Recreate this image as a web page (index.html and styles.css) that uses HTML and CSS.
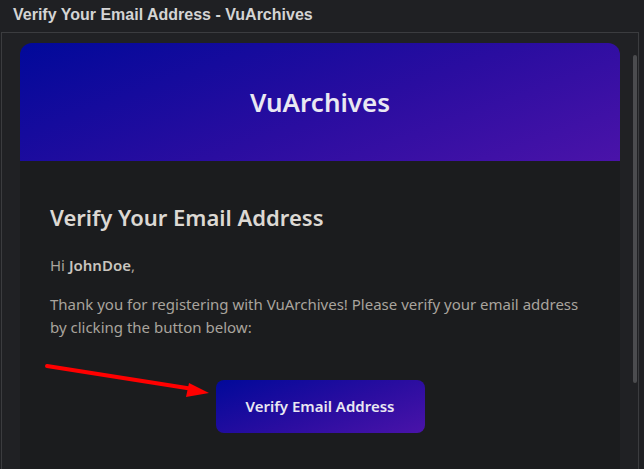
FILE: index.html
```html
<!DOCTYPE html>
<html lang="en">
<head>
<meta charset="utf-8">
<title>Verify Your Email Address - VuArchives</title>
<link rel="stylesheet" href="styles.css">
</head>
<body>
<div class="titlebar">Verify Your Email Address - VuArchives</div>
<div class="frame">
  <div class="email">
    <div class="email-header">VuArchives</div>
    <div class="email-body">
      <h2 class="heading">Verify Your Email Address</h2>
      <p class="text">Hi <strong class="name">JohnDoe</strong>,</p>
      <p class="text">Thank you for registering with VuArchives! Please verify your email address by clicking the button below:</p>
      <div class="actions"><a class="button" href="#">Verify Email Address</a></div>
    </div>
  </div>
  <div class="scrollbar"></div>
  <svg class="arrow" width="220" height="60" viewBox="0 0 220 60" xmlns="http://www.w3.org/2000/svg">
    <line x1="46" y1="26" x2="192" y2="49" stroke="#ff0000" stroke-width="4" stroke-linecap="round"/>
    <polygon points="188,43 208,53 185,57" fill="#ff0000"/>
  </svg>
</div>
</body>
</html>
```
FILE: styles.css
```css
html, body {
  margin: 0;
  padding: 0;
  background: #1f2023;
  height: 100%;
  overflow: hidden;
}
.titlebar {
  height: 32px;
  box-sizing: border-box;
  padding: 6px 0 0 13px;
  font-family: "Liberation Sans", Arial, sans-serif;
  font-weight: bold;
  font-size: 16px;
  color: #d4d4d4;
}
.frame {
  position: relative;
  margin-left: 1px;
  width: 638px;
  box-sizing: border-box;
  height: 437px;
  overflow: hidden;
  border: 1px solid #3b3c3f;
  border-bottom: none;
  background: #202124;
  padding: 10px 0 0 18px;
}
.email {
  width: 600px;
  font-family: "Noto Sans", "Open Sans", sans-serif;
}
.email-header {
  height: 118px;
  border-radius: 12px 12px 0 0;
  background: linear-gradient(160deg, #01099a 0%, #2a0da0 55%, #4a13a9 100%);
  color: #e9e8f2;
  font-size: 26px;
  font-weight: 600;
  display: flex;
  align-items: center;
  justify-content: center;
}
.email-body {
  background: #1b1c1e;
  padding: 42px 30px 40px;
  height: 400px;
}
.heading {
  margin: 0 0 22px;
  font-size: 22px;
  font-weight: 600;
  color: #dcd8d3;
  line-height: 1.3;
}
.text {
  margin: 0 0 16px;
  font-size: 15px;
  line-height: 23px;
  color: #a9a49d;
}
.name {
  color: #c9c5bf;
  font-weight: 600;
}
.actions {
  display: flex;
  justify-content: center;
  padding-top: 25px;
}
.button {
  display: flex;
  align-items: center;
  justify-content: center;
  width: 209px;
  height: 53px;
  border-radius: 8px;
  background: linear-gradient(160deg, #01099a 0%, #2a0da0 55%, #4a13a9 100%);
  color: #e9e8f2;
  font-size: 15px;
  font-weight: 600;
  text-decoration: none;
}
.scrollbar {
  position: absolute;
  right: 1px;
  top: 22px;
  width: 4px;
  height: 328px;
  border-radius: 2px;
  background: #4b4c4f;
}
.arrow {
  position: absolute;
  left: -1px;
  top: 307px;
}
```
